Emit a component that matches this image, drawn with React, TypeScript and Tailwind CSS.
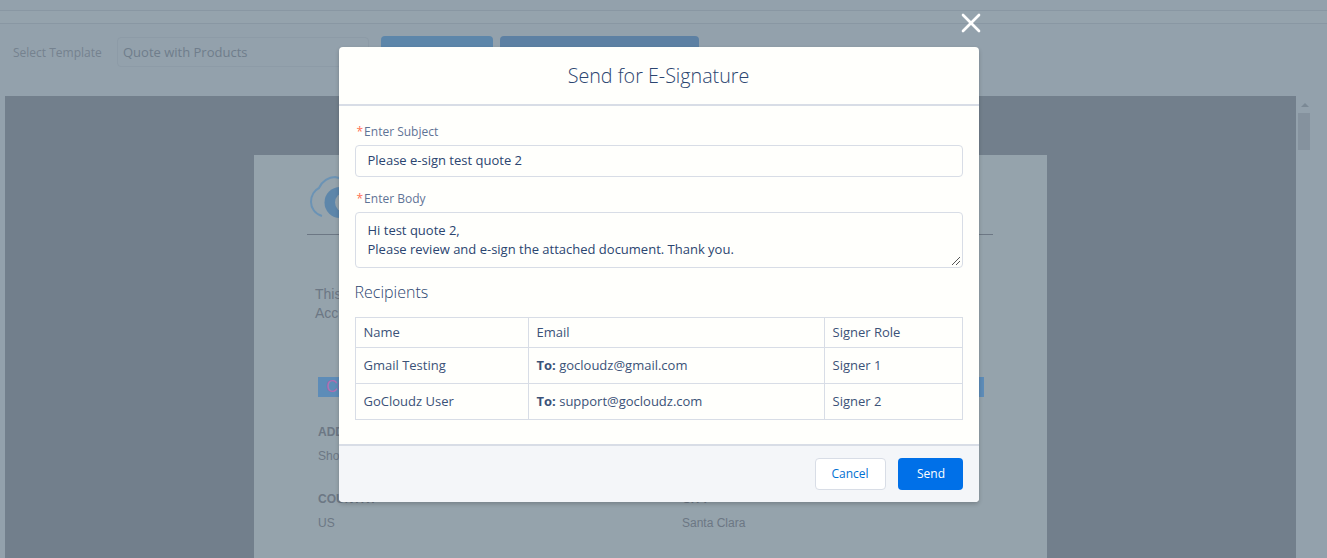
import { X } from 'lucide-react';

const RECIPIENTS = [
  { name: 'Gmail Testing', email: 'gocloudz@gmail.com', role: 'Signer 1' },
  { name: 'GoCloudz User', email: 'support@gocloudz.com', role: 'Signer 2' },
];

function RequiredLabel({ children }: { children: string }) {
  return (
    <div className="flex h-[18px] items-center pl-[2px] text-[12px] text-[#5f7396]">
      <span className="mr-[1px] text-[#ff6f52]">*</span>
      {children}
    </div>
  );
}

function BackgroundPage() {
  return (
    <div className="flex h-[558px] flex-col overflow-hidden bg-[#93a1ac]">
      <div className="h-[11px] border-b border-[#8997a3]" />
      <div className="h-[13px] border-b border-[#8997a3] bg-[#95a3ad]" />
      <div className="flex h-[72px] items-start pt-[12px]">
        <span className="ml-[13px] mt-[8px] w-[104px] text-[12px] text-[#75828f]">Select Template</span>
        <div className="mt-[1px] flex h-[30px] w-[252px] items-center rounded border border-[#8d9ba7] pl-[5px] pt-[2px] text-[13px] text-[#6f7d8b]">
          Quote with Products
        </div>
        <div className="ml-[12px] h-[40px] w-[112px] rounded bg-[#5d86aa]" />
        <div className="ml-[7px] h-[40px] w-[199px] rounded bg-[#5d80a3]" />
      </div>
      <div className="flex flex-1">
        <div className="ml-[5px] h-full w-[1291px] bg-[#727f8c] pl-[249px] pt-[59px]">
          <div className="h-full w-[793px] bg-[#95a3ac] px-[53px] pt-[20px] font-['Liberation_Sans',sans-serif] text-[12px] text-[#6c7784]">
            <div className="h-[60px] w-[686px] border-b border-[#6c7784]">
              <svg width="60" height="44" viewBox="0 0 60 44" className="ml-[2px]">
                <path d="M13 41 C6 39 2 33 2 27 C2 20 6 15 10 13 C13 6 20 2 26 2 L34 4" fill="none" stroke="#6b93b5" strokeWidth="2" />
                <circle cx="31" cy="27.5" r="15.5" fill="#5d86aa" />
                <circle cx="36" cy="27.5" r="10" fill="#95a3ac" />
              </svg>
            </div>
            <div className="ml-[8px] mt-[50px] text-[14px] leading-[19px]">
              <div>This</div>
              <div>Acc</div>
            </div>
            <div className="ml-[11px] mt-[54px] flex h-[20px] w-[666px] items-center bg-[#5d8cb8] pl-[8px] text-[16px] text-[#b06cb0]">
              CO
            </div>
            <div className="ml-[11px] mt-[27px] grid grid-cols-[364px_1fr]">
              <div>
                <div className="font-bold leading-[16px]">ADDRESS</div>
                <div className="mt-[8px] leading-[16px]">Shop</div>
                <div className="mt-[27px] font-bold leading-[16px]">COUNTRY</div>
                <div className="mt-[8px] leading-[16px]">US</div>
              </div>
              <div>
                <div className="font-bold leading-[16px]">STREET</div>
                <div className="mt-[8px] leading-[16px]">Main</div>
                <div className="mt-[27px] font-bold leading-[16px]">CITY</div>
                <div className="mt-[8px] leading-[16px]">Santa Clara</div>
              </div>
            </div>
          </div>
        </div>
        <div className="ml-[2px] w-[13px] pt-[7px]">
          <div className="mx-auto h-0 w-0 border-x-[4px] border-b-[4px] border-x-transparent border-b-[#7b8995]" />
          <div className="mt-[6px] h-[37px] w-[12px] bg-[#85929e]" />
        </div>
      </div>
    </div>
  );
}

export default function App() {
  return (
    <div className="relative h-[558px] w-[1327px] overflow-hidden font-['Open_Sans',sans-serif]">
      <BackgroundPage />

      <div className="absolute inset-0 flex justify-center pr-[10px] pt-[47px]">
        <div className="relative h-[455px] w-[640px] rounded-[4px] bg-[#fffffc] shadow-[0_2px_4px_rgba(0,0,0,0.2)]">
          <button type="button" className="absolute right-[-8px] top-[-40px] text-white" aria-label="Close">
            <X className="h-[32px] w-[32px]" strokeWidth={2} />
          </button>

          <div className="flex h-[59px] items-center justify-center rounded-t-[4px] border-b-2 border-[#d8dde6] text-[19.7px] font-light text-[#2b4570]">
            Send for E-Signature
          </div>

          <div className="h-[338px] px-[16px] pt-[17px]">
            <RequiredLabel>Enter Subject</RequiredLabel>
            <div className="mt-[4px] flex h-[32px] items-center rounded-[4px] border border-[#d8dde6] pl-[12px] text-[13px] text-[#2b4570]">
              Please e-sign test quote 2
            </div>
            <div className="mt-[13px]">
              <RequiredLabel>Enter Body</RequiredLabel>
            </div>
            <div className="relative mt-[4px] h-[56px] rounded-[4px] border border-[#d8dde6] px-[12px] pt-[8px] text-[13px] leading-[19px] text-[#2b4570]">
              <div>Hi test quote 2,</div>
              <div>Please review and e-sign the attached document. Thank you.</div>
              <svg width="10" height="10" viewBox="0 0 10 10" className="absolute bottom-[1px] right-[1px]">
                <path d="M1 9 L9 1 M5 9 L9 5" stroke="#555" strokeWidth="1" />
              </svg>
            </div>
            <div className="mt-[13px] text-[16px] font-light leading-[22px] text-[#2b4570]">Recipients</div>
            <table className="mt-[14px] w-[608px] table-fixed border-collapse text-[13px] text-[#3b5278]">
              <colgroup>
                <col className="w-[173px]" />
                <col className="w-[296px]" />
                <col />
              </colgroup>
              <tbody>
                <tr className="h-[30px]">
                  <td className="border border-[#d8dde6] px-[8px]">Name</td>
                  <td className="border border-[#d8dde6] px-[8px]">Email</td>
                  <td className="border border-[#d8dde6] px-[8px]">Signer Role</td>
                </tr>
                {RECIPIENTS.map((r) => (
                  <tr key={r.email} className="h-[36px]">
                    <td className="border border-[#d8dde6] px-[8px]">{r.name}</td>
                    <td className="border border-[#d8dde6] px-[8px]">
                      <b className="font-bold">To:</b> {r.email}
                    </td>
                    <td className="border border-[#d8dde6] px-[8px]">{r.role}</td>
                  </tr>
                ))}
              </tbody>
            </table>
          </div>

          <div className="flex h-[58px] items-center justify-end gap-[12px] rounded-b-[4px] border-t-2 border-[#d8dde6] bg-[#f4f6f9] pr-[16px]">
            <button type="button" className="h-[32px] w-[71px] rounded-[4px] border border-[#d8dde6] bg-white text-[12px] text-[#0070d2]">
              Cancel
            </button>
            <button type="button" className="h-[32px] w-[65px] rounded-[4px] bg-[#0070e8] pl-[2px] text-[12px] font-medium text-white">
              Send
            </button>
          </div>
        </div>
      </div>
    </div>
  );
}
